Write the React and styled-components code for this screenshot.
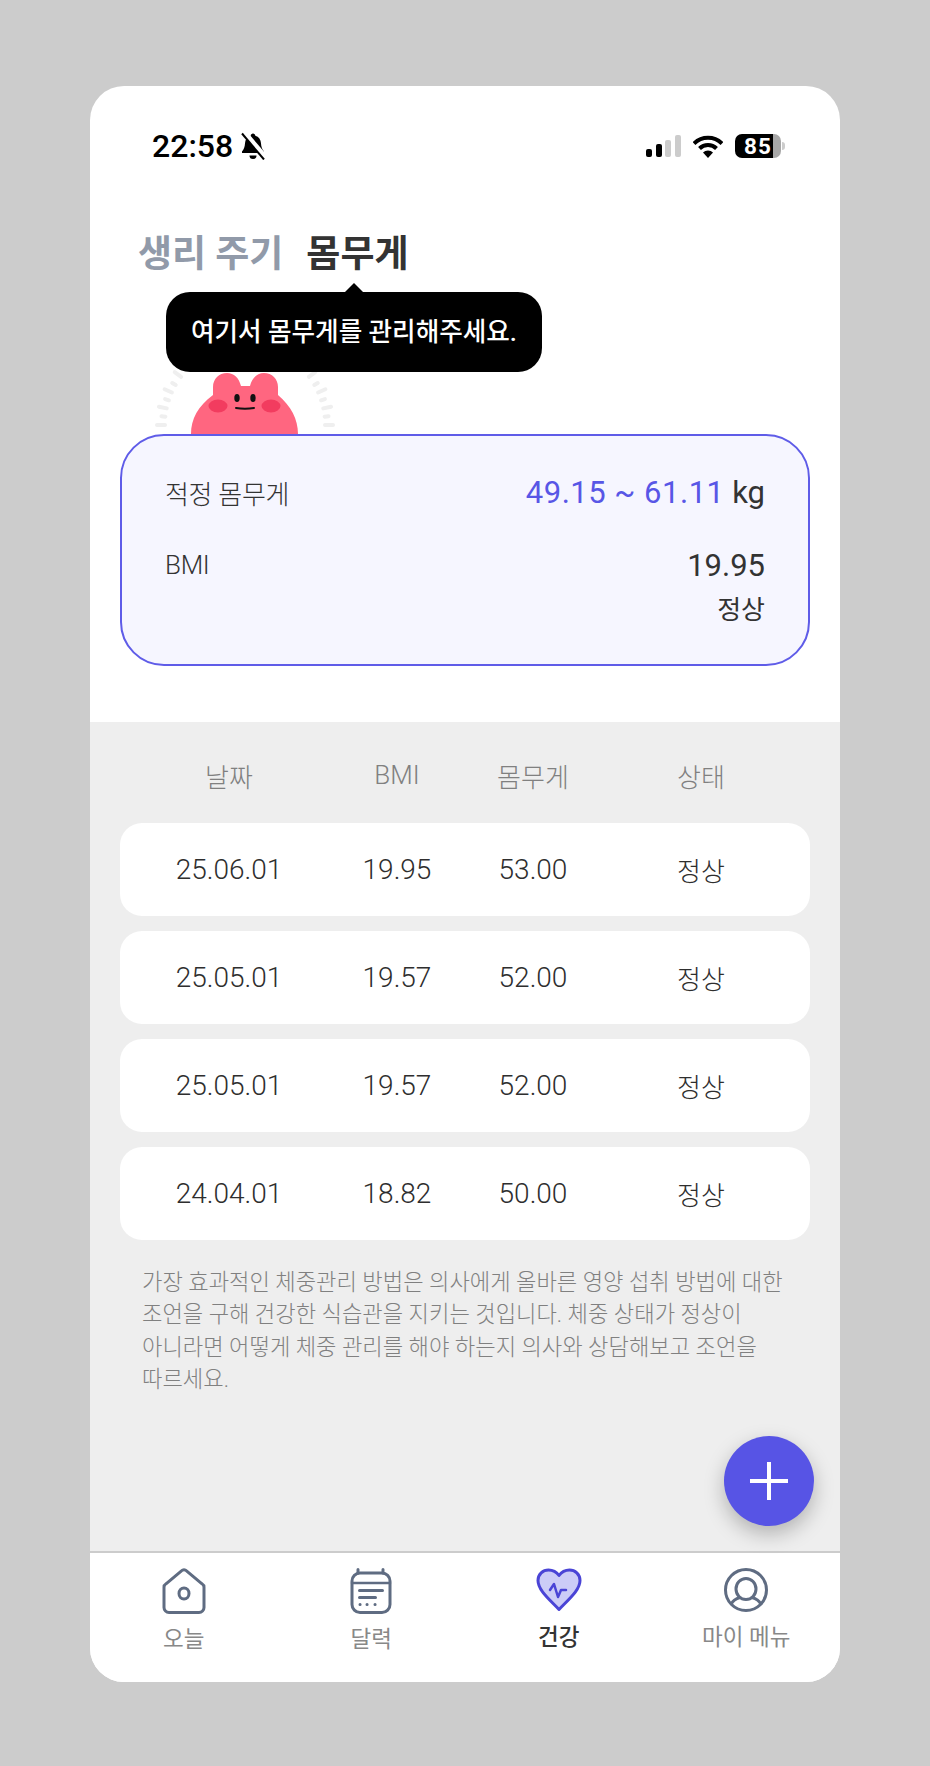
import React from 'react'
import styled, { createGlobalStyle } from 'styled-components'

const rows = [
  { date: '25.06.01', bmi: '19.95', weight: '53.00', state: '정상' },
  { date: '25.05.01', bmi: '19.57', weight: '52.00', state: '정상' },
  { date: '25.05.01', bmi: '19.57', weight: '52.00', state: '정상' },
  { date: '24.04.01', bmi: '18.82', weight: '50.00', state: '정상' },
]

const rayAngles = [90, 84, 78, 72, 66, 60, 53]

const BellIcon = () => (
  <svg width="26" height="28" viewBox="0 0 26 28">
    <path d="M13 1.5c1.3 0 2.2 1 2.3 2.2 3.6 1 5.5 4 5.700 7.600.2 3.500 1 6 3 8.200v1.500H2v-1.500c2-2.200 2.800-4.700 3-8.200.2-3.600 2.100-6.600 5.700-7.600.1-1.200 1-2.200 2.300-2.200z" fill="#000" />
    <path d="M9.500 23.500h7a3.500 3.500 0 0 1-7 0z" fill="#000" />
    <path d="M4.500 0.500L26 26" stroke="#fff" strokeWidth="5" />
    <path d="M2 1.500L24 27.500" stroke="#000" strokeWidth="2" />
  </svg>
)

const SignalIcon = () => (
  <svg width="35" height="22" viewBox="0 0 35 22">
    <rect x="0" y="14" width="6" height="8" rx="2" fill="#000" />
    <rect x="10" y="9" width="6" height="13" rx="2" fill="#000" />
    <rect x="19" y="5" width="6" height="17" rx="2" fill="#ccc" />
    <rect x="29" y="0" width="6" height="22" rx="2" fill="#ccc" />
  </svg>
)

const WifiIcon = () => (
  <svg width="30" height="23" viewBox="0 0 30 23">
    <path d="M1 8.500a20 20 0 0 1 28 0" fill="none" stroke="#000" strokeWidth="4" />
    <path d="M6.500 13.500a12 12 0 0 1 17 0" fill="none" stroke="#000" strokeWidth="4" />
    <path d="M15 23l-5-5.500a7 7 0 0 1 10 0z" fill="#000" />
  </svg>
)

const HomeIcon = () => (
  <svg width="44" height="46" viewBox="0 0 44 46" fill="none" stroke="#5f6c82" strokeWidth="3">
    <path d="M19.500 2.800a3.500 3.500 0 0 1 5 0l15.500 13a4 4 0 0 1 2 3.500v20.200a5 5 0 0 1-5 5H7a5 5 0 0 1-5-5V19.300a4 4 0 0 1 2-3.500z" strokeLinejoin="round" />
    <ellipse cx="22" cy="25.500" rx="5" ry="5.500" />
  </svg>
)

const CalendarIcon = () => (
  <svg width="42" height="46" viewBox="0 0 42 46" fill="none" stroke="#5f6c82" strokeWidth="3" strokeLinecap="round">
    <rect x="2" y="5" width="38" height="39.500" rx="8" />
    <path d="M8 1.500v3.500M33 1.500v3.500" />
    <path d="M2 15h38" strokeWidth="2.500" />
    <path d="M9.500 22.500h23M9.500 29.500h16" />
    <path d="M10 36.500h.1M17 36.500h.1M25 36.500h.1" />
  </svg>
)

const HeartIcon = () => (
  <svg width="46" height="44" viewBox="0 0 46 44">
    <path d="M23 41.500C13 31 2 22 2 12.500 2 6 7 2 12.500 2 17 2 20.500 4 23 7.500 25.500 4 29 2 33.500 2 39 2 44 6 44 12.500 44 22 33 31 23 41.500z" fill="#ccccf7" stroke="#4a44d6" strokeWidth="3" strokeLinejoin="round" />
    <path d="M14 22l4-6 4 13 3-7h5" fill="none" stroke="#4a44d6" strokeWidth="2.500" strokeLinecap="round" strokeLinejoin="round" />
  </svg>
)

const UserIcon = () => (
  <svg width="44" height="44" viewBox="0 0 44 44" fill="none" stroke="#5f6c82" strokeWidth="3">
    <circle cx="22" cy="22" r="20.500" />
    <ellipse cx="22" cy="21" rx="10" ry="10.500" />
    <path d="M7 36.500c2-4.500 7-6.500 9-7M37 36.500c-2-4.500-7-6.500-9-7" />
  </svg>
)

const Ray = ({ angle, index }) => (
  <rect
    x="98"
    y={index % 2 ? -5 : -9}
    width="4"
    height={index % 2 ? 8 : 12}
    rx="2"
    fill="#efefef"
    transform={`rotate(${angle} 100 81)`}
  />
)

const Mascot = () => (
  <MascotSvg viewBox="0 0 200 90">
    {rayAngles.map((angle, i) => (
      <React.Fragment key={angle}>
        <Ray angle={angle} index={i} />
        <Ray angle={-angle} index={i} />
      </React.Fragment>
    ))}
    <path d="M46 90C46 75 53 62 68 51L68 43C68 35 74 29 82 29C89 29 94 34 96 42L105 42C107 34 112 29 119 29C127 29 133 35 133 43L133 51C146 62 153 75 153 90Z" fill="#ff6680" />
    <ellipse cx="73" cy="62" rx="9.500" ry="6.500" fill="#f23c5f" />
    <ellipse cx="126" cy="62" rx="9.500" ry="6.500" fill="#f23c5f" />
    <ellipse cx="92" cy="54" rx="2.700" ry="4" fill="#111" />
    <ellipse cx="108" cy="54" rx="2.700" ry="4" fill="#111" />
    <path d="M91 64q9 1.500 18 0" fill="none" stroke="#111" strokeWidth="2" strokeLinecap="round" />
  </MascotSvg>
)

const App = () => {
  return (
    <Page>
      <GlobalStyle />
      <Phone>
        <StatusBar>
          <Clock>
            22:58
            <BellIcon />
          </Clock>
          <StatusIcons>
            <SignalIcon />
            <WifiIcon />
            <Battery>
              <BatteryBody>85</BatteryBody>
              <BatteryNub />
            </Battery>
          </StatusIcons>
        </StatusBar>

        <TopSection>
          <Tabs>
            <Tab>생리 주기</Tab>
            <Tab $active>몸무게</Tab>
          </Tabs>
          <Tooltip>여기서 몸무게를 관리해주세요.</Tooltip>
          <Mascot />
          <SummaryCard>
            <SummaryRow>
              <SummaryLabel>적정 몸무게</SummaryLabel>
              <SummaryValue>
                <Accent>49.15 ~ 61.11</Accent> kg
              </SummaryValue>
            </SummaryRow>
            <SummaryRow>
              <SummaryLabel>BMI</SummaryLabel>
              <SummaryValue>19.95</SummaryValue>
            </SummaryRow>
            <SummaryState>정상</SummaryState>
          </SummaryCard>
        </TopSection>

        <HistorySection>
          <HeaderRow>
            <span>날짜</span>
            <span>BMI</span>
            <span>몸무게</span>
            <span>상태</span>
          </HeaderRow>
          <RowList>
            {rows.map((row, i) => (
              <DataRow key={i}>
                <span>{row.date}</span>
                <span>{row.bmi}</span>
                <span>{row.weight}</span>
                <StateCell>{row.state}</StateCell>
              </DataRow>
            ))}
          </RowList>
          <Note>
            가장 효과적인 체중관리 방법은 의사에게 올바른 영양 섭취 방법에 대한
            <br />
            조언을 구해 건강한 식습관을 지키는 것입니다. 체중 상태가 정상이
            <br />
            아니라면 어떻게 체중 관리를 해야 하는지 의사와 상담해보고 조언을
            <br />
            따르세요.
          </Note>
          <Fab aria-label="추가">
            <svg width="38" height="38" viewBox="0 0 38 38">
              <path d="M19 0v38M0 19h38" stroke="#fff" strokeWidth="4" />
            </svg>
          </Fab>
        </HistorySection>

        <BottomNav>
          <NavItem>
            <HomeIcon />
            오늘
          </NavItem>
          <NavItem>
            <CalendarIcon />
            달력
          </NavItem>
          <NavItem $active>
            <HeartIcon />
            건강
          </NavItem>
          <NavItem>
            <UserIcon />
            마이 메뉴
          </NavItem>
        </BottomNav>
      </Phone>
    </Page>
  )
}

const GlobalStyle = createGlobalStyle`
  body {
    margin: 0;
    background: #cccccc;
    font-family: Roboto, "Noto Sans CJK KR", sans-serif;
  }
`

const Page = styled.div`
  display: flex;
  justify-content: center;
  height: 1766px;
  padding-top: 86px;
  box-sizing: border-box;
`

const Phone = styled.div`
  display: flex;
  flex-direction: column;
  width: 750px;
  height: 1596px;
  background: #fff;
  border-radius: 34px;
  overflow: hidden;
`

const StatusBar = styled.div`
  display: flex;
  justify-content: space-between;
  align-items: center;
  height: 44px;
  padding: 38px 55px 0 62px;
`

const Clock = styled.div`
  display: flex;
  align-items: center;
  gap: 7px;
  font-size: 32px;
  font-weight: 500;
  color: #000;
`

const StatusIcons = styled.div`
  display: flex;
  align-items: center;
  gap: 12px;
`

const Battery = styled.div`
  display: flex;
  align-items: center;
  gap: 1px;
`

const BatteryBody = styled.div`
  width: 46px;
  height: 24px;
  line-height: 24px;
  border-radius: 7px;
  background: linear-gradient(to right, #000 83%, #a8a8a8 83%);
  color: #fff;
  font-size: 22.5px;
  font-weight: 700;
  letter-spacing: 1px;
  text-align: center;
`

const BatteryNub = styled.div`
  width: 3px;
  height: 8px;
  border-radius: 0 3px 3px 0;
  background: #ccc;
`

const TopSection = styled.div`
  position: relative;
  display: flex;
  flex-direction: column;
  height: 554px;
  padding: 62px 30px 0;
  box-sizing: border-box;
`

const Tabs = styled.div`
  display: flex;
  gap: 23px;
  padding-left: 18px;
  height: 42px;
  align-items: center;
`

const Tab = styled.div`
  font-size: 37px;
  font-weight: 700;
  color: ${(p) => (p.$active ? '#333333' : '#919aa9')};
`

const Tooltip = styled.div`
  position: absolute;
  left: 76px;
  top: 124px;
  width: 376px;
  height: 80px;
  line-height: 80px;
  border-radius: 24px;
  background: #000;
  color: #fff;
  font-size: 25.6px;
  font-weight: 500;
  text-align: center;
  z-index: 1;

  &::before {
    content: '';
    position: absolute;
    left: 178px;
    top: -9px;
    border-left: 10px solid transparent;
    border-right: 10px solid transparent;
    border-bottom: 10px solid #000;
  }
`

const MascotSvg = styled.svg`
  display: block;
  flex: none;
  width: 200px;
  height: 90px;
  margin: 72px 0 0 25px;
`

const SummaryCard = styled.div`
  display: flex;
  flex-direction: column;
  height: 232px;
  padding: 36px 43px 0;
  box-sizing: border-box;
  border: 2px solid #5f5ce8;
  border-radius: 44px;
  background: #f6f6ff;
  color: #333;
`

const SummaryRow = styled.div`
  display: flex;
  justify-content: space-between;
  align-items: center;
  height: 40px;

  & + & {
    margin-top: 33px;
  }
`

const SummaryLabel = styled.span`
  font-size: 26px;
  font-weight: 300;
  letter-spacing: -0.3px;
`

const SummaryValue = styled.span`
  font-size: 31px;
`

const Accent = styled.span`
  color: #5856e6;
  letter-spacing: 0.5px;
`

const SummaryState = styled.div`
  margin-top: 4px;
  text-align: right;
  font-size: 26px;
`

const HistorySection = styled.div`
  position: relative;
  flex: 1;
  padding: 30px 30px 0;
  background: #eeeeee;
`

const columns = `
  display: grid;
  grid-template-columns: 218px 118px 154px 182px;
  text-align: center;
`

const HeaderRow = styled.div`
  ${columns}
  height: 46px;
  align-items: center;
  font-size: 26px;
  font-weight: 300;
  color: #808080;
`

const RowList = styled.div`
  display: flex;
  flex-direction: column;
  gap: 15px;
  margin-top: 25px;
`

const DataRow = styled.div`
  ${columns}
  height: 93px;
  align-items: center;
  border-radius: 22px;
  background: #fff;
  font-size: 28px;
  font-weight: 300;
  color: #2e2e2e;
`

const StateCell = styled.span`
  font-size: 26px;
`

const Note = styled.p`
  margin: 26px 0 0;
  padding-left: 22px;
  font-size: 22.2px;
  font-weight: 300;
  line-height: 32.4px;
  color: #808080;
`

const Fab = styled.button`
  position: absolute;
  right: 26px;
  bottom: 25px;
  display: flex;
  align-items: center;
  justify-content: center;
  width: 90px;
  height: 90px;
  padding: 0;
  border: none;
  border-radius: 50%;
  background: #5754e5;
  box-shadow: 0 8px 20px rgba(0, 0, 0, 0.25);
`

const BottomNav = styled.nav`
  display: grid;
  grid-template-columns: repeat(4, 1fr);
  height: 131px;
  box-sizing: border-box;
  padding-top: 15px;
  border-top: 2px solid #cccccc;
  background: #fff;
`

const NavItem = styled.div`
  display: flex;
  flex-direction: column;
  align-items: center;
  gap: 7px;
  font-size: 22.5px;
  font-weight: ${(p) => (p.$active ? 500 : 400)};
  color: ${(p) => (p.$active ? '#333333' : '#888888')};
`

export default App
